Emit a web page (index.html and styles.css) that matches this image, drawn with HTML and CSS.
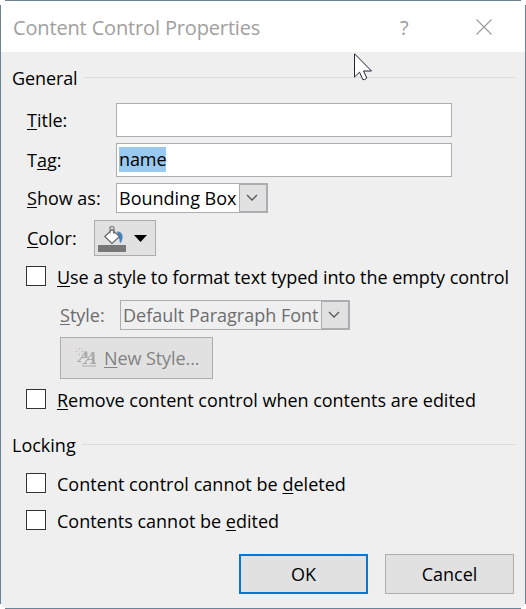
FILE: index.html
```html
<!DOCTYPE html>
<html lang="en">
<head>
<meta charset="utf-8">
<title>Content Control Properties</title>
<link rel="stylesheet" href="styles.css">
</head>
<body>
<main class="dialog">
  <header class="titlebar">
    <h1 class="caption">Content Control Properties</h1>
    <span class="help">?</span>
    <svg class="close" width="16" height="16" viewBox="0 0 16 16"><path d="M.5 .5l15 15M15.5 .5l-15 15"/></svg>
  </header>
  <div class="content">
    <h2 class="section general">General</h2>
    <div class="row row-title"><label class="label"><u>T</u>itle:</label><div class="field"></div></div>
    <div class="row row-tag"><label class="label">T<u>a</u>g:</label><div class="field"><span class="selected">name</span></div></div>
    <div class="row row-show"><label class="label"><u>S</u>how as:</label>
      <div class="combo"><span class="value box">Bounding Box</span><span class="drop"><svg width="12" height="8" viewBox="0 0 12 8"><path d="M1 1l5 5 5-5"/></svg></span></div>
    </div>
    <div class="row row-color"><label class="label short"><u>C</u>olor:</label>
      <div class="color">
        <svg class="bucket" width="30" height="30" viewBox="0 0 30 30">
          <path class="paint" d="M19 7.500C23 7.500 25 10 24.500 14C24.300 17 22.500 19 22 19.500C21.700 17 21.500 14 20 12Z"/>
          <path class="can" d="M14 5.500L21.500 12.500 14 19.500 6.800 12.500Z"/>
          <path class="handle" d="M12 9.500V3.500Q12 2.500 14 2.500T16 3.500V8.500"/>
          <circle class="knob" cx="16" cy="8.500" r="1.200"/>
          <path class="swatch" d="M0 21h28v7H0z"/>
        </svg>
        <svg class="arrow" width="13" height="7" viewBox="0 0 13 7"><path d="M0 0h13L6.500 7z"/></svg>
      </div>
    </div>
    <div class="check c1"><span class="tick"></span><span class="text use"><u>U</u>se a style to format text typed into the empty control</span></div>
    <div class="row row-style disabled"><label class="label"><u>S</u>tyle:</label>
      <div class="combo"><span class="value">Default Paragraph Font</span><span class="drop"><svg width="12" height="8" viewBox="0 0 12 8"><path d="M1 1l5 5 5-5"/></svg></span></div>
    </div>
    <div class="new-style">
      <svg class="styles-icon" width="22" height="20" viewBox="0 0 22 20">
        <path class="spark" d="M4.500 0v3M4.500 6v3M0 4.500h3M6 4.500h3M1 1l2 2M6 6l2 2M8 1L6 3M3 6L1 8"/>
        <path class="thin" d="M2 14.500h4M3.500 14.500L11 4.500M6.500 10.500h4"/>
        <path class="thick" d="M10.800 4.500L11.200 11"/>
        <path class="thin" d="M7.500 16.500h4.500M9.500 16.500L18 5M12.500 12.500h5M15 16.500h6M7 19h14"/>
        <path class="thick" d="M18 5L18.500 16.500"/>
      </svg>
      <span><u>N</u>ew Style...</span>
    </div>
    <div class="check c2"><span class="tick"></span><span class="text remove"><u>R</u>emove content control when contents are edited</span></div>
    <h2 class="section locking">Locking</h2>
    <div class="check c3"><span class="tick"></span><span class="text del">Content control cannot be <u>d</u>eleted</span></div>
    <div class="check c4"><span class="tick"></span><span class="text">Contents cannot be <u>e</u>dited</span></div>
    <footer class="buttons"><div class="button default">OK</div><div class="button">Cancel</div></footer>
  </div>
  <svg class="cursor" width="20" height="29" viewBox="0 0 20 29"><path d="M.5 .8V24L5.500 19.200 8.800 26.500Q10.500 27.500 12.800 25L9.500 18H17.500Z"/></svg>
</main>
</body>
</html>
```
FILE: styles.css
```css
* { box-sizing: border-box; }
body {
  margin: 0;
  background: #fff;
  color: #000;
  font: 400 18px/24px "Open Sans", "Noto Sans", sans-serif;
}
u { text-decoration: underline 1px; text-underline-offset: 2px; text-decoration-skip-ink: none; }
.dialog {
  position: relative;
  display: flex;
  flex-direction: column;
  width: 526px;
  height: 609px;
  padding: 1px;
  overflow: hidden;
  white-space: nowrap;
  background:
    linear-gradient(#6b8396, #6b8396) 5px 0 / 516px 1px no-repeat,
    linear-gradient(#6b8396, #6b8396) 5px 608px / 516px 1px no-repeat,
    linear-gradient(#6b8396, #6b8396) 0 5px / 1px 599px no-repeat,
    linear-gradient(#6b8396, #6b8396) 525px 5px / 1px 599px no-repeat,
    #fff;
}
.titlebar { display: flex; align-items: center; height: 51px; padding: 2px 32px 0 12px; color: #999; }
.caption { margin: 0; width: 387px; font-size: 20px; font-weight: 400; letter-spacing: -.15px; color: #a0a0a0; }
.help { width: 76px; font-size: 20px; font-weight: 400; }
.close { margin-top: -2px; fill: none; stroke: #999; stroke-width: 1.1; }
.content { display: flex; flex-direction: column; height: 556px; padding: 14px 10px 0 11px; background: #efefef; border-radius: 0 0 5px 5px; }
.section { display: flex; align-items: center; gap: 6px; margin: 0; height: 24px; font-size: 18px; font-weight: 400; }
.section::after { content: ""; flex: 1; height: 1px; margin-top: -1px; background: #dadada; }
.general { letter-spacing: -.1px; }
.locking { margin-top: 24px; }
.row { display: flex; align-items: center; margin-left: 15px; }
.label { width: 89px; }
.label.short { width: 67px; }
.row-title { margin-top: 13px; }
.row-tag, .row-show { margin-top: 6px; }
.field { width: 336px; height: 34px; padding: 3px 2px; border: 1px solid #abadb3; background: #fff; }
.selected { display: inline-block; height: 25px; background: #99c9ef; letter-spacing: -.1px; }
.combo { display: flex; height: 30px; border: 1px solid #abadb3; background: #fff; }
.value { width: 122px; padding: 2px 0 0 2px; }
.drop { display: flex; align-items: center; justify-content: center; width: 28px; padding-right: 3px; border: 1px solid #abadb3; background: #e1e1e1; }
.drop svg { fill: none; stroke: #555; stroke-width: 1.3; }
.row-color { margin-top: 7px; }
.color { display: flex; align-items: center; width: 62px; height: 36px; padding-left: 3px; border: 1px solid #adadad; background: #e1e1e1; }
.bucket { margin-top: 2px; }
.can { fill: #fff; stroke: #666; stroke-width: 1.2; }
.handle { fill: none; stroke: #777; stroke-width: 1.2; }
.knob { fill: #777; }
.paint { fill: #4682bd; }
.swatch { fill: #777; }
.arrow { margin-left: 6px; }
.check { display: flex; align-items: center; height: 20px; margin-left: 14px; }
.tick { width: 20px; height: 20px; margin-right: 11px; border: 1px solid #333; background: #fff; }
.text { padding-top: 2px; }
.use { letter-spacing: -.055px; }
.remove { letter-spacing: -.02px; }
.c1 { margin-top: 10px; }
.row-style { margin: 14px 0 0 48px; }
.row-style .label { width: 60px; }
.row-style .value { width: 200px; }
.disabled { color: #6d6d6d; }
.disabled .combo { background: #efefef; }
.new-style { display: flex; align-items: center; gap: 7px; width: 153px; height: 42px; margin: 7px 0 0 48px; padding-left: 14px; border: 1px solid #adadad; background: #e1e1e1; color: #838383; letter-spacing: -.08px; }
.styles-icon { fill: none; margin-top: -3px; }
.spark { stroke: #d2caca; stroke-width: 1; }
.thin { stroke: #aaa; stroke-width: 1.2; }
.thick { stroke: #aaa; stroke-width: 2.8; }
.c2 { margin-top: 10px; }
.c3 { margin-top: 16px; }
.del { letter-spacing: .03px; }
.c4 { margin-top: 17px; }
.buttons { display: flex; justify-content: flex-end; gap: 17px; margin: 24px 1px 0 0; }
.button { display: flex; align-items: center; justify-content: center; width: 129px; height: 40px; border: 1px solid #adadad; background: #e1e1e1; }
.default { border: 2px solid #0078d7; }
.cursor { position: absolute; left: 354px; top: 53px; fill: #fff; stroke: #223; stroke-width: 1; }
```
